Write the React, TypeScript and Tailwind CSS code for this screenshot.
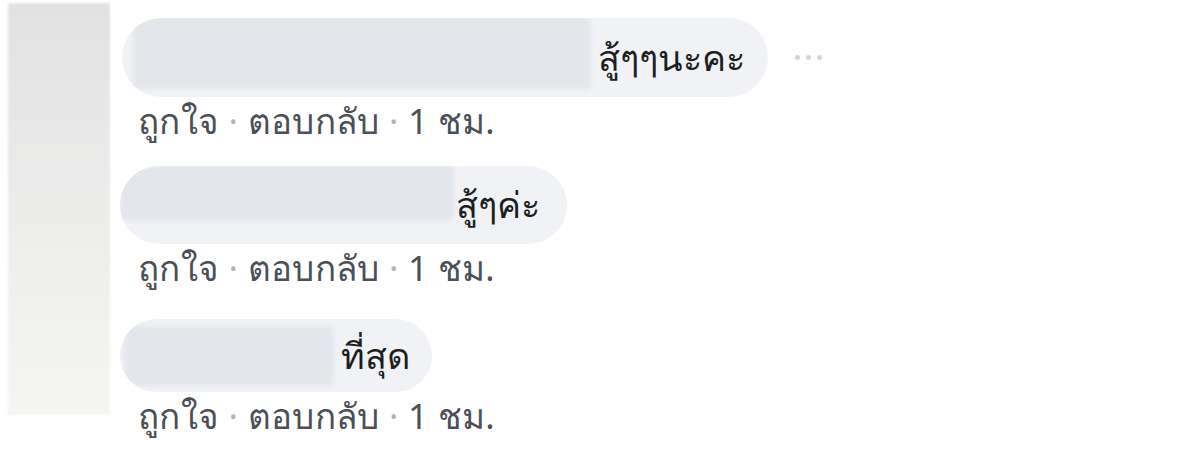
const comments = [
  {
    text: 'สู้ๆๆนะคะ',
    bubble: 'mt-[18px] ml-[12px] w-[646px] h-[79px]',
    name: 'ml-[11px] w-[457px] h-[72px] -mt-[1px]',
    textPad: 'ml-[8px]',
    more: true,
  },
  {
    text: 'สู้ๆค่ะ',
    bubble: 'mt-[24px] ml-[10px] w-[447px] h-[78px]',
    name: 'ml-0 w-[333px] h-[55px] -mt-[1px]',
    textPad: 'ml-[3px]',
    more: false,
  },
  {
    text: 'ที่สุด',
    bubble: 'mt-[30px] ml-[10px] w-[312px] h-[73px]',
    name: 'ml-[4px] w-[209px] h-[60px] mt-[7px]',
    textPad: 'ml-[8px]',
    more: false,
  },
];

function Meta() {
  return (
    <div className="ml-[28px] mt-[3px] h-[42px] leading-[42px] text-[35px] tracking-[0.3px] text-[#4b4f56] whitespace-nowrap">
      ถูกใจ <span className="text-[#b0b3b8]">·</span> ตอบกลับ{' '}
      <span className="text-[#b0b3b8]">·</span> 1 ชม.
    </div>
  );
}

export default function App() {
  return (
    <div
      className="w-[1200px] h-[461px] bg-white flex overflow-hidden"
      style={{ fontFamily: '"Noto Sans", "Liberation Sans", Tahoma, sans-serif' }}
    >
      {/* blurred avatar column */}
      <div className="ml-[8px] mt-[3px] w-[102px] h-[412px] shrink-0 bg-gradient-to-b from-[#e2e2e2] via-[#ececeb] to-[#f5f5f3] blur-[1px]" />

      <div className="flex flex-col">
        {comments.map((c, i) => (
          <div key={i}>
            <div className="flex items-center">
              <div
                className={`${c.bubble} shrink-0 rounded-full bg-[#f0f2f5] flex items-start overflow-hidden`}
              >
                <div className={`${c.name} shrink-0 bg-[#e3e6ea] blur-[2px]`} />
                <div
                  className={`${c.textPad} self-center text-[36px] leading-none text-[#1c1e21] whitespace-nowrap`}
                >
                  {c.text}
                </div>
              </div>
              {c.more && (
                <div className="mt-[18px] ml-[27px] flex gap-[6px]">
                  <span className="w-[5px] h-[5px] rounded-full bg-[#d3d5d9]" />
                  <span className="w-[5px] h-[5px] rounded-full bg-[#d3d5d9]" />
                  <span className="w-[5px] h-[5px] rounded-full bg-[#d3d5d9]" />
                </div>
              )}
            </div>
            <Meta />
          </div>
        ))}
      </div>
    </div>
  );
}
